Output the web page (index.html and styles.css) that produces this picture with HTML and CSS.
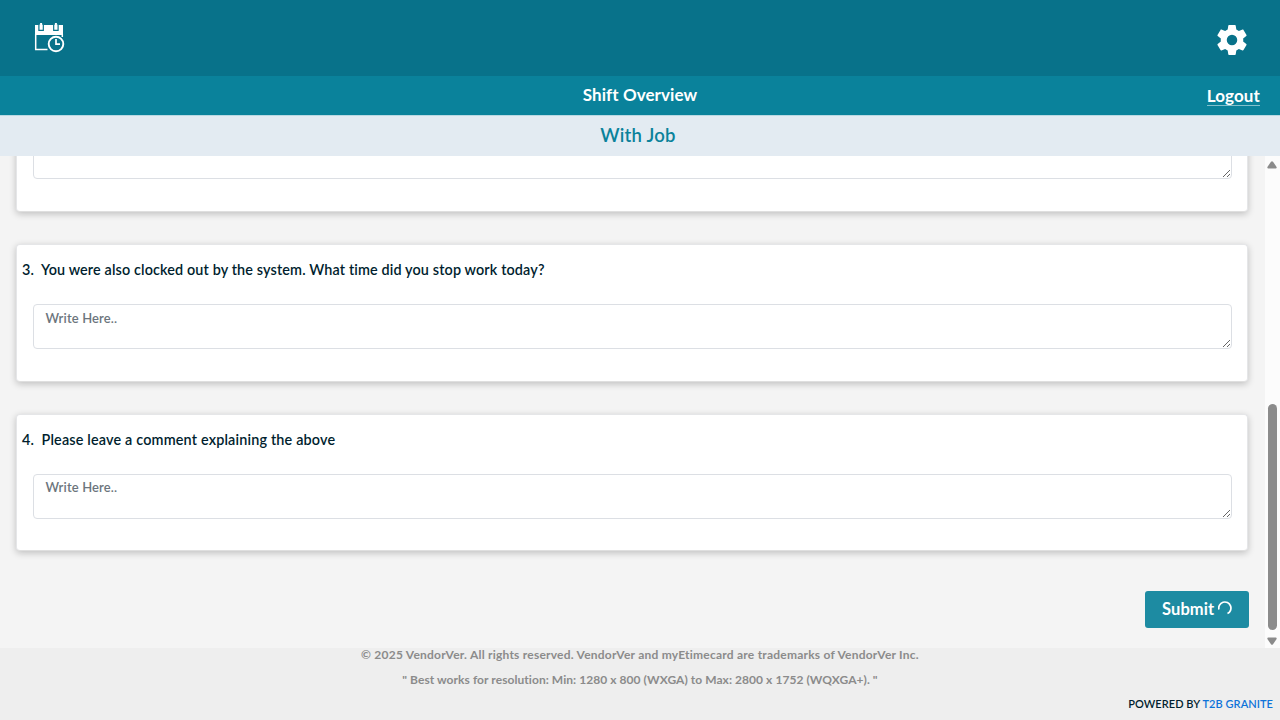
FILE: index.html
```html
<!DOCTYPE html>
<html lang="en">
<head>
<meta charset="utf-8">
<title>Shift Overview</title>
<link rel="stylesheet" href="styles.css">
</head>
<body>
<header class="topbar">
  <svg class="calendar-icon" width="32" height="32" viewBox="0 0 32 32" fill="none" stroke="#fff">
    <path d="M2 3h28v10H2z" fill="#fff" stroke="none"/>
    <path d="M5.900 2v6.300h4.400V2M20.700 2v6.300h4.400V2" fill="#fff" stroke="#08728a" stroke-width="1.200"/>
    <path d="M6.500 1h3.200v2H6.500zM21.300 1h3.200v2h-3.200z" fill="#08728a" stroke="none"/>
    <path d="M8.100 1v6M22.900 1v6" stroke-width="2"/>
    <path d="M2.700 12v15.600H14.500M29.300 12v3" stroke-width="1.500"/>
    <circle cx="23" cy="22" r="8.700" fill="#08728a" stroke="none"/>
    <circle cx="23" cy="22" r="7.300" stroke-width="1.900"/>
    <path d="M23 17v5.100h4" stroke-width="1.700"/>
  </svg>
  <svg class="gear-icon" width="36" height="36" viewBox="0 0 24 24" fill="#fff">
    <path d="M19.430 12.980c.04-.32.07-.64.07-.98s-.03-.66-.07-.98l2.110-1.650c.19-.15.24-.42.12-.64l-2-3.460c-.12-.22-.39-.3-.61-.22l-2.490 1c-.52-.4-1.080-.73-1.690-.98l-.38-2.650A.488.488 0 0 0 14 2h-4c-.25 0-.46.18-.49.42l-.38 2.650c-.61.25-1.170.59-1.690.98l-2.490-1c-.23-.09-.49 0-.61.22l-2 3.460c-.13.22-.07.49.12.64l2.110 1.650c-.04.32-.07.65-.07.98s.03.66.07.98l-2.110 1.650c-.19.15-.24.42-.12.64l2 3.460c.12.22.39.3.61.22l2.490-1c.52.4 1.080.73 1.690.98l.38 2.650c.03.24.24.42.49.42h4c.25 0 .46-.18.49-.42l.38-2.650c.61-.25 1.170-.59 1.690-.98l2.490 1c.23.09.49 0 .61-.22l2-3.460c.12-.22.07-.49-.12-.64zM12 15.500A3.500 3.500 0 1 1 12 8.500a3.500 3.500 0 0 1 0 7z"/>
  </svg>
</header>
<nav class="titlebar">
  <h1 class="title">Shift Overview</h1>
  <a class="logout">Logout</a>
</nav>
<div class="subtitle"><span class="subtitle-text">With Job</span></div>
<main class="viewport">
  <div class="content">
    <section class="card">
      <p class="question"></p>
      <textarea class="answer"></textarea>
    </section>
    <section class="card">
      <p class="question"><span class="number">3.</span><span class="q-long">You were also clocked out by the system. What time did you stop work today?</span></p>
      <textarea class="answer" placeholder="Write Here.."></textarea>
    </section>
    <section class="card card-last">
      <p class="question"><span class="number">4.</span><span class="q-short">Please leave a comment explaining the above</span></p>
      <textarea class="answer" placeholder="Write Here.."></textarea>
    </section>
    <button class="submit"><span class="submit-text">Submit</span>
      <svg class="spinner" width="14" height="14" viewBox="0 0 14 14" fill="none" stroke="#fff" stroke-width="1.700"><path d="M.9 8.500A6.100 6.100 0 1 1 9.500 12.600"/></svg>
    </button>
  </div>
  <div class="scrollbar">
    <svg width="10" height="8" viewBox="0 0 10 8"><path d="M4 .8Q5-.4 6 .8L9.600 6Q10 7.500 8.600 7.500H1.400Q0 7.500.4 6z" fill="#8b8b8b"/></svg>
    <div class="thumb"></div>
    <svg width="10" height="8" viewBox="0 0 10 8"><path d="M4 7.200Q5 8.400 6 7.200L9.600 2Q10 .5 8.600.5H1.400Q0 .5.4 2z" fill="#8b8b8b"/></svg>
  </div>
</main>
<footer class="footer">
  <p class="copyright"><span>© 2025 VendorVer. All rights reserved. VendorVer and myEtimecard are trademarks of VendorVer Inc.</span></p>
  <p class="resolution"><span>" Best works for resolution: Min: 1280 x 800 (WXGA) to Max: 2800 x 1752 (WQXGA+). "</span></p>
  <p class="powered"><span>POWERED BY <a class="brand">T2B GRANITE</a></span></p>
</footer>
</body>
</html>
```
FILE: styles.css
```css
* { box-sizing: border-box; }
body { margin: 0; height: 720px; overflow: hidden; display: flex; flex-direction: column; background: #f4f4f4; font-family: Lato, sans-serif; font-weight: 500; color: #001e2e; }
p, h1 { margin: 0; }
.topbar { height: 76px; flex: none; background: #08728a; display: flex; align-items: flex-start; justify-content: space-between; padding: 22px 30px 0 33px; }
.gear-icon { margin-top: -.5px; }
.titlebar { height: 39px; flex: none; background: #0a829b; color: #fff; display: grid; grid-template-columns: 1fr auto 1fr; align-items: center; padding: 0 20px; }
.title { grid-column: 2; font-size: 17px; font-weight: 700; line-height: 38px; height: 39px; letter-spacing: .07px; }
.logout { grid-column: 3; justify-self: end; font-size: 17px; font-weight: 700; line-height: 19px; letter-spacing: .1px; border-bottom: 1px solid #83c0cd; }
.subtitle { height: 41px; flex: none; background: #e3ebf2; border-top: 1px solid #b9d9e3; color: #0a829b; font-size: 18.500px; line-height: 38px; text-align: center; padding-right: 4px; font-weight: 600; letter-spacing: .25px; }
.viewport { height: 492px; flex: none; display: flex; overflow: hidden; }
.content { flex: 1; height: 492px; display: flex; flex-direction: column; justify-content: flex-end; padding: 0 17px 20px 16px; }
.card { height: 138px; flex: none; margin-bottom: 32px; background: #fff; border: 1px solid #e5e6e8; border-bottom-color: #dfdfdf; border-radius: 4px; box-shadow: 0 2px 7px rgba(0, 0, 0, .22); padding: 14px 15px 0 6px; }
.card-last { margin-bottom: 40px; height: 137.500px; }
.question { display: flex; height: 21px; line-height: 21px; font-size: 14.400px; font-weight: 600; margin-left: -1px; letter-spacing: .13px; }
.number { width: 19px; flex: none; }
.q-short { margin-left: .5px; letter-spacing: .17px; }
.answer { display: block; width: 1199.500px; height: 45px; margin: 24px 0 0 9.500px; padding: 5px 12px; border: 1px solid #dcdfe4; border-radius: 4px; font: 500 13px/16px Lato, sans-serif; letter-spacing: .13px; background: #fff; outline: none; resize: vertical; overflow: hidden; }
.card-last .answer { padding-top: 4px; }
.answer::placeholder { color: #6c757d; opacity: 1; font-weight: 600; }
.submit { align-self: flex-end; width: 104px; height: 37px; flex: none; display: flex; align-items: center; gap: 4px; padding: 0 0 1px 17px; margin-right: -1px; border: 0; border-radius: 3px; background: #1d8ba2; color: #fff; font: 700 16.500px/24px Lato, sans-serif; letter-spacing: .1px; }
.submit-text { width: 52px; text-align: left; }
.spinner { flex: none; margin-top: -2px; }
.scrollbar { width: 15px; flex: none; background: #fcfcfc; display: flex; flex-direction: column; align-items: center; padding: 5px 0 3px; }
.scrollbar svg { flex: none; margin: -.5px 1px 0 0; }
.thumb { width: 9px; height: 226px; margin-top: 235.500px; margin-bottom: 7px; border-radius: 5px; background: #8b8b8b; }
.footer { height: 72px; flex: none; background: #eee; color: #8b8b8b; font-size: 12px; line-height: 14px; font-weight: 700; text-align: center; }
.copyright { letter-spacing: .225px; }
.resolution { margin-top: 11px; letter-spacing: .06px; }
.powered { margin-top: 10px; text-align: right; padding-right: 7px; font-size: 11px; font-weight: 600; color: #001e2e; letter-spacing: .06px; }
.brand { color: #0d73d9; }
```
